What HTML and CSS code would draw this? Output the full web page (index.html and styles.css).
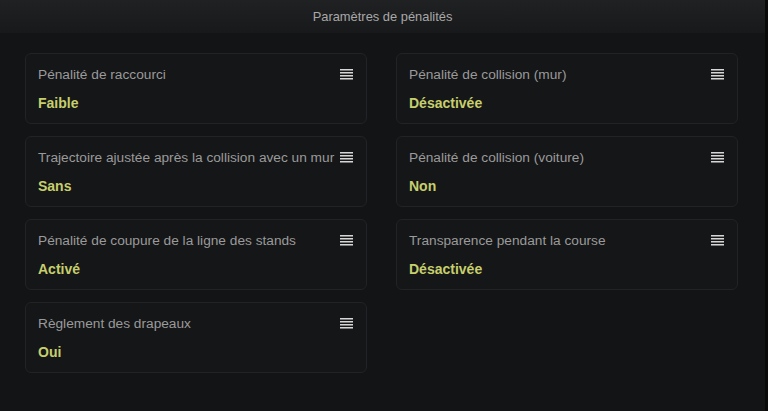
FILE: index.html
```html
<!DOCTYPE html>
<html>
<head>
	<title>Paramètres de pénalités</title>
	<meta charset="UTF-8">
	<link rel="stylesheet" href="styles.css">
</head>
<body>

<div id="content">

	<div id="header">Paramètres de pénalités</div>

	<div id="settings">

		<div class="setting">
			<div class="row">
				<div class="label">Pénalité de raccourci</div>
				<div class="menu"><span></span><span></span><span></span><span></span></div>
			</div>
			<div class="value">Faible</div>
		</div>

		<div class="setting">
			<div class="row">
				<div class="label">Pénalité de collision (mur)</div>
				<div class="menu"><span></span><span></span><span></span><span></span></div>
			</div>
			<div class="value">Désactivée</div>
		</div>

		<div class="setting">
			<div class="row">
				<div class="label">Trajectoire ajustée après la collision avec un mur</div>
				<div class="menu"><span></span><span></span><span></span><span></span></div>
			</div>
			<div class="value">Sans</div>
		</div>

		<div class="setting">
			<div class="row">
				<div class="label">Pénalité de collision (voiture)</div>
				<div class="menu"><span></span><span></span><span></span><span></span></div>
			</div>
			<div class="value">Non</div>
		</div>

		<div class="setting">
			<div class="row">
				<div class="label">Pénalité de coupure de la ligne des stands</div>
				<div class="menu"><span></span><span></span><span></span><span></span></div>
			</div>
			<div class="value">Activé</div>
		</div>

		<div class="setting">
			<div class="row">
				<div class="label">Transparence pendant la course</div>
				<div class="menu"><span></span><span></span><span></span><span></span></div>
			</div>
			<div class="value">Désactivée</div>
		</div>

		<div class="setting">
			<div class="row">
				<div class="label">Règlement des drapeaux</div>
				<div class="menu"><span></span><span></span><span></span><span></span></div>
			</div>
			<div class="value">Oui</div>
		</div>

	</div>

</div>

</body>
</html>
```

FILE: styles.css
```css
* {
	box-sizing: border-box;
	font-family: "Liberation Sans", Arial, sans-serif;
}
body {
	margin: 0;
	padding: 0;
	background: #131416;
}
#content {
	width: 768px;
	height: 411px;
	border-right: 3px solid #0a0a0b;
	background: #131416;
	overflow: hidden;
}
#header {
	height: 33px;
	line-height: 33px;
	text-align: center;
	font-size: 12.9px;
	color: #a8a8a8;
	background: linear-gradient(#202123, #18191b);
}
#settings {
	display: grid;
	grid-template-columns: 342px 342px;
	column-gap: 29px;
	row-gap: 12px;
	padding: 20px 0 0 25px;
}
.setting {
	height: 71px;
	background: #151618;
	border: 1px solid #222326;
	border-radius: 6px;
	padding: 13px 13px 0 12px;
}
.row {
	display: flex;
	justify-content: space-between;
	align-items: flex-start;
}
.label {
	font-size: 13.7px;
	line-height: 16px;
	color: #9a9a9a;
	white-space: nowrap;
}
.menu {
	width: 13px;
	margin-top: 2px;
	display: flex;
	flex-direction: column;
	gap: 1px;
}
.menu span {
	height: 2px;
	background: #b9b9b9;
	border-top: 1px solid #d6d6d6;
	border-bottom: 1px solid #7a7a7a;
}
.value {
	margin-top: 11px;
	font-size: 14px;
	line-height: 18px;
	font-weight: bold;
	color: #c6cf6c;
}
```
